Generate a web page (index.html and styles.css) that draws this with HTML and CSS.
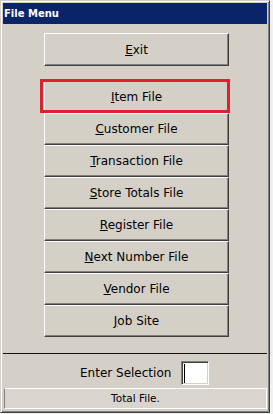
FILE: index.html
```html
<!DOCTYPE html>
<html lang="en">
<head>
    <meta charset="UTF-8">
    <meta name="viewport" content="width=device-width, initial-scale=1.0">
    <title>File Menu</title>
    <link rel="stylesheet" href="styles.css">
</head>
<body>
    <div class="window">
        <div class="title-bar">File Menu</div>

        <div class="client">
            <div class="menu">
                <button class="btn btn-exit"><u>E</u>xit</button>

                <div class="stack">
                    <button class="btn selected"><u>I</u>tem File<span class="highlight"></span></button>
                    <button class="btn"><u>C</u>ustomer File</button>
                    <button class="btn"><u>T</u>ransaction File</button>
                    <button class="btn"><u>S</u>tore Totals File</button>
                    <button class="btn"><u>R</u>egister File</button>
                    <button class="btn"><u>N</u>ext Number File</button>
                    <button class="btn"><u>V</u>endor File</button>
                    <button class="btn"><u>J</u>ob Site</button>
                </div>
            </div>

            <div class="divider"></div>

            <div class="entry">
                <span class="entry-label">Enter Selection</span>
                <div class="field"><span class="caret"></span></div>
            </div>

            <div class="status">Total File.</div>
        </div>
    </div>
</body>
</html>
```

FILE: styles.css
```css
* {
    box-sizing: border-box;
    margin: 0;
    padding: 0;
}

body {
    background-color: #f0f0f0;
    font-family: "DejaVu Sans", Verdana, sans-serif;
    color: #000;
}

.window {
    width: 270px;
    height: 413px;
    background-color: #d4d0c8;
    border: 1px solid;
    border-color: #d4d0c8 #404040 #404040 #d4d0c8;
    box-shadow: inset 1px 1px #fff, inset -1px -1px #808080;
    padding: 2px;
    display: flex;
    flex-direction: column;
}

.title-bar {
    height: 21px;
    background-color: #0a246a;
    color: #fff;
    font-size: 10px;
    font-weight: bold;
    line-height: 22px;
    padding-left: 1px;
}

.client {
    flex: 1;
    display: flex;
    flex-direction: column;
}

/* Button column */
.menu {
    padding: 9px 0 0 41px;
}

.btn {
    display: block;
    position: relative;
    width: 185px;
    height: 32px;
    background-color: #d4d0c8;
    border: 1px solid;
    border-color: #fff #404040 #404040 #fff;
    box-shadow: inset -1px -1px #808080;
    font-family: "DejaVu Sans", Verdana, sans-serif;
    font-size: 12px;
    color: #000;
    text-align: center;
    cursor: pointer;
}

.btn u {
    text-underline-offset: 1px;
}

.btn-exit {
    height: 33px;
}

.stack {
    margin-top: 15px;
}

/* red annotation box around the selected entry */
.highlight {
    position: absolute;
    left: -5px;
    top: -3px;
    width: 190px;
    height: 34px;
    border: 3px solid #e0202c;
    pointer-events: none;
}

.divider {
    margin-top: 16px;
    height: 1px;
    background-color: #111;
}

/* Selection row */
.entry {
    display: flex;
    align-items: center;
    margin-top: 7px;
    padding-left: 77px;
    height: 24px;
}

.entry-label {
    font-size: 12px;
    margin-right: 10px;
}

.field {
    width: 28px;
    height: 24px;
    background-color: #fff;
    border: 1px solid;
    border-color: #808080 #fff #fff #808080;
    box-shadow: inset 1px 1px #404040, inset -1px -1px #d4d0c8;
    padding: 2px 0 0 2px;
}

.caret {
    display: block;
    width: 1px;
    height: 19px;
    background-color: #000;
}

.status {
    margin: 3px 0 0 1px;
    width: 263px;
    height: 21px;
    background-color: #dad4cf;
    border: 1px solid;
    border-color: #fff #fff #fff #808080;
    font-size: 10.5px;
    line-height: 19px;
    text-align: center;
}
```
